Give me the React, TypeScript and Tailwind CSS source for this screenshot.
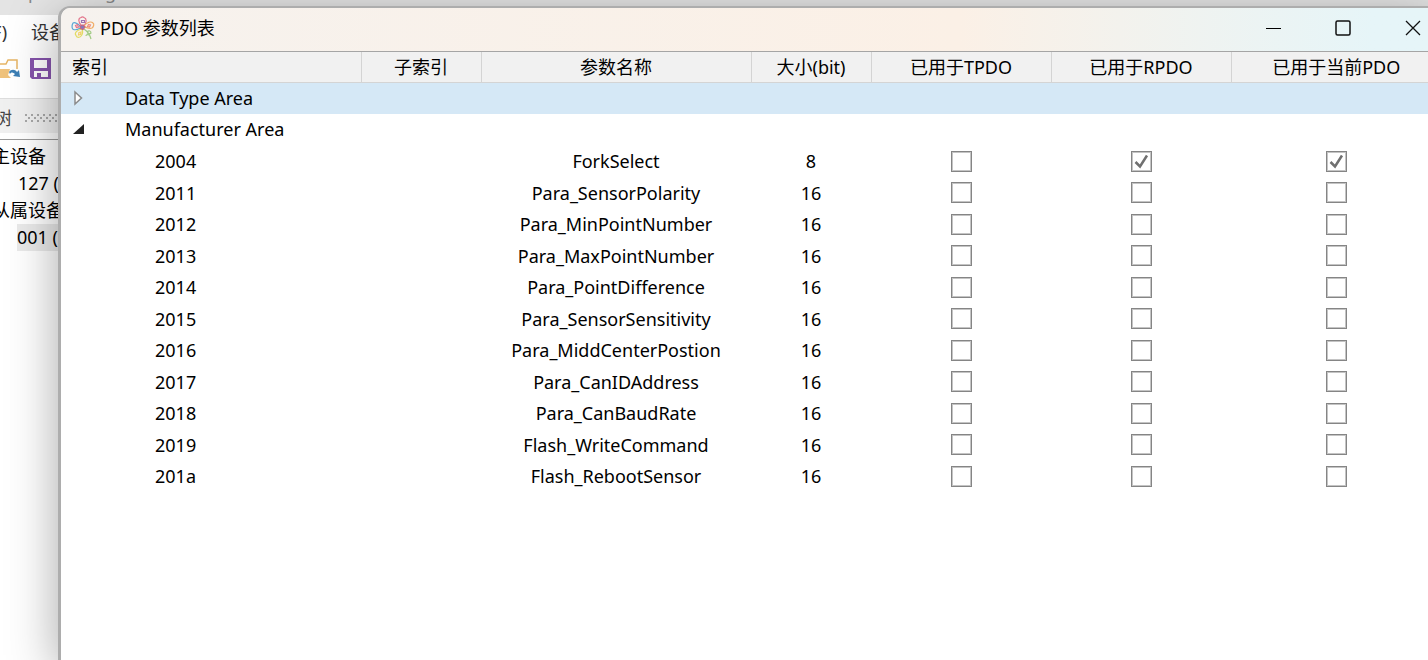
import { useState } from 'react'

type ParameterRow = {
    index: string
    name: string
    size: number
    tpdo: boolean
    rpdo: boolean
    current: boolean
}

const createRow = (
    index: string,
    name: string,
    size = 16,
    rpdo = false,
    current = false,
): ParameterRow => ({ index, name, size, tpdo: false, rpdo, current })

const MANUFACTURER_ROWS: ParameterRow[] = [
    createRow('2004', 'ForkSelect', 8, true, true),
    createRow('2011', 'Para_SensorPolarity'),
    createRow('2012', 'Para_MinPointNumber'),
    createRow('2013', 'Para_MaxPointNumber'),
    createRow('2014', 'Para_PointDifference'),
    createRow('2015', 'Para_SensorSensitivity'),
    createRow('2016', 'Para_MiddCenterPostion'),
    createRow('2017', 'Para_CanIDAddress'),
    createRow('2018', 'Para_CanBaudRate'),
    createRow('2019', 'Flash_WriteCommand'),
    createRow('201a', 'Flash_RebootSensor'),
]

const COLUMNS = [
    '索引',
    '子索引',
    '参数名称',
    '大小(bit)',
    '已用于TPDO',
    '已用于RPDO',
    '已用于当前PDO',
]

const FlowerIcon = () => (
    <svg
        viewBox="0 0 24 24"
        className="size-6"
        fill="none"
        strokeWidth="1.2"
        opacity="0.85"
    >
        <path d="M11 10C7 7 7 2 10 1.5c1-.7 2-.7 3 0 3 1 3 6-1 8.5" stroke="#e0607a" />
        <path d="M10 11C6 6 2 6 1.5 8c-.7 2-.7 5 1 5.5 3 1 5-.5 7.5-2" stroke="#3f9bd0" />
        <path d="M13 10c3-4 7-5 9-3 1.5 1 .5 4-1 5-3 1-5 0-8-1.5" stroke="#f0a04c" />
        <path d="M11 13c-5 1-8 4-6 6.5 1 2.5 4 2.5 5.5 0 1.5-2 1.5-4 .5-6.5" stroke="#ddd84b" />
        <path d="M13 13c3 2 6 6 7 10M16 16c2-2 4-1 4 1-1 1-2 1-4 0M18 19c-2-1-3 0-3 1" stroke="#93c572" />
        <path d="M10.5 4.5h3v2h-3z" stroke="#8c5fa8" />
        <path d="M4.5 9.5l2-1 1 2.5-2 .5z" stroke="#e0607a" />
        <path d="M17.5 8.5l2 .5-1 2-2-.5z" stroke="#ec7a67" />
        <path d="M8 16.5l2-.5-.5 2.5-2 .5z" stroke="#f3c84e" />
        <path d="M9 10l3-1 2 2-2 2.5-2.5-1z" fill="#6d66b5" stroke="#c04c6e" />
    </svg>
)

const OpenFolderIcon = () => (
    <svg viewBox="0 0 24 24" className="size-6" fill="none">
        <path d="M1 14V7h9l2-4h9v9" stroke="#e6b566" strokeWidth="1.5" />
        <path d="M0 21V12h14l-1 3-1 3 3 3z" fill="#efc27c" />
        <path d="M13 15c2-3 6-3 8 0l2-2 1 7-7-1 2-2c-2-2-4-2-5 0z" fill="#3c7fb5" />
    </svg>
)

const SaveIcon = () => (
    <svg viewBox="0 0 21 21" className="size-[21px]">
        <path d="M0 0h21v21H2l-2-2z" fill="#8654ac" />
        <path d="M4 2h13v8H4z" fill="#fff" />
        <path d="M4 13h14v6H4z" fill="#fff" />
        <path d="M7 15h4v5H7z" fill="#8654ac" />
    </svg>
)

const MainWindow = () => (
    <div className="h-full w-full bg-white font-['Noto_Sans','Noto_Sans_CJK_SC',sans-serif] text-[18px] text-black">
        {/* Only the descenders of the caption reach into view */}
        <div className="flex h-[15px] gap-[66px] overflow-hidden bg-[#e4e4e4] pl-7 text-[#888]">
            <span className="-mt-[22px] leading-7">p</span>
            <span className="-mt-[22px] leading-7">g</span>
        </div>
        <nav className="flex h-[34px] items-center gap-6 whitespace-nowrap text-[#333]">
            <button type="button" className="-ml-2">
                F)
            </button>
            <button type="button">设备</button>
        </nav>
        <div className="flex h-[49px] items-start gap-2.5 pt-2">
            <button type="button" aria-label="打开" className="-ml-1">
                <OpenFolderIcon />
            </button>
            <button type="button" aria-label="保存" className="pt-px">
                <SaveIcon />
            </button>
        </div>
        <div className="flex h-[35px] items-center gap-3 border-t border-[#ddd] bg-[#f0f0f0] pt-1 text-[#444]">
            <span className="-ml-1.5">树</span>
            <svg className="h-[9px] w-40" aria-hidden="true">
                <defs>
                    <pattern
                        id="grip"
                        width="6"
                        height="6"
                        patternUnits="userSpaceOnUse"
                    >
                        <path
                            d="M1 0h2v2H1zM4 3h2v2H4z"
                            fill="#a8a8a8"
                        />
                    </pattern>
                </defs>
                <rect width="160" height="9" fill="url(#grip)" />
            </svg>
        </div>
        <div className="mt-1.5 border-t border-[#999] pt-[3px]">
            <ul className="whitespace-nowrap leading-[27px]">
                <li className="-ml-2">主设备</li>
                <li className="ml-[18px]">127 (主)</li>
                <li className="-ml-2">从属设备</li>
                <li className="ml-[17px] w-40 bg-[#eaeaea]">001 (从)</li>
            </ul>
        </div>
    </div>
)

const TitleBar = () => (
    <header className="flex h-11 shrink-0 items-center justify-between border-b border-[#a5a5a5] bg-linear-to-r from-[#f6f2ee] via-[#fbf0e6] via-65% to-[#e6f5f8] to-95% pb-[3px] pl-2.5">
        <div className="flex items-center gap-[5px]">
            <FlowerIcon />
            <h1 className="text-[18px] leading-6">PDO 参数列表</h1>
        </div>
        <div className="flex h-full">
            <button
                type="button"
                aria-label="最小化"
                className="flex w-[69px] items-center justify-center"
            >
                <span className="h-px w-[15px] bg-black" />
            </button>
            <button
                type="button"
                aria-label="最大化"
                className="flex w-[69px] items-center justify-center"
            >
                <svg
                    viewBox="0 0 16 16"
                    className="size-4"
                    fill="none"
                    stroke="#111"
                    strokeWidth="1.5"
                >
                    <rect x="1" y="1" width="14" height="14" rx="1.5" />
                </svg>
            </button>
            <button
                type="button"
                aria-label="关闭"
                className="flex w-[65px] items-center justify-start pl-7"
            >
                <svg
                    viewBox="0 0 16 16"
                    className="size-4"
                    stroke="#111"
                    strokeWidth="1.3"
                >
                    <path d="M1 1l14 14M15 1L1 15" />
                </svg>
            </button>
        </div>
    </header>
)

type CheckCellProps = {
    label: string
    defaultChecked: boolean
}

const CheckCell = ({ label, defaultChecked }: CheckCellProps) => (
    <td className="p-0">
        <label className="relative mx-auto block size-[21px]">
            <input
                type="checkbox"
                aria-label={label}
                defaultChecked={defaultChecked}
                className="peer block size-[21px] appearance-none border border-[#858585] bg-white shadow-[inset_0_0_0_1px_#c4c4c4]"
            />
            <svg
                viewBox="0 0 21 21"
                fill="none"
                stroke="#707070"
                strokeWidth="2.5"
                className="pointer-events-none absolute inset-0 hidden peer-checked:block"
            >
                <path d="M4.5 11l4.5 4.5L16 4.5" />
            </svg>
        </label>
    </td>
)

type GroupRowProps = {
    title: string
    expanded: boolean
    selected?: boolean
    onToggle: () => void
}

const GroupRow = ({ title, expanded, selected, onToggle }: GroupRowProps) => (
    <tr className={selected ? 'h-8 bg-[#d5e8f6]' : 'h-[31px]'}>
        <td colSpan={7} className="p-0 align-top">
            <button
                type="button"
                aria-expanded={expanded}
                onClick={onToggle}
                className="flex h-[30px] items-center gap-10 pl-3"
            >
                <svg viewBox="0 0 12 16" className="h-4 w-3">
                    {expanded ? (
                        <path d="M11 3v10H0z" fill="#222" />
                    ) : (
                        <path
                            d="M2 2l6.5 6L2 14z"
                            fill="#fff"
                            stroke="#8c8c8c"
                            strokeWidth="1.5"
                        />
                    )}
                </svg>
                {title}
            </button>
        </td>
    </tr>
)

const ParameterTable = () => {
    const [dataTypeOpen, setDataTypeOpen] = useState(false)
    const [manufacturerOpen, setManufacturerOpen] = useState(true)

    return (
        <table className="w-full table-fixed border-collapse text-center text-[18px] leading-6">
            <colgroup>
                <col className="w-[300px]" />
                <col className="w-[120px]" />
                <col className="w-[270px]" />
                <col className="w-[120px]" />
                <col className="w-[180px]" />
                <col className="w-[180px]" />
                <col />
            </colgroup>
            <thead>
                <tr className="h-[30px] bg-[#f1f1f1]">
                    {COLUMNS.map((column) => (
                        <th
                            key={column}
                            scope="col"
                            className="border-r border-b border-[#d4d4d4] p-0 font-normal first:pl-[11px] first:text-left"
                        >
                            {column}
                        </th>
                    ))}
                </tr>
            </thead>
            <tbody>
                <GroupRow
                    title="Data Type Area"
                    selected
                    expanded={dataTypeOpen}
                    onToggle={() => setDataTypeOpen(!dataTypeOpen)}
                />
                <GroupRow
                    title="Manufacturer Area"
                    expanded={manufacturerOpen}
                    onToggle={() => setManufacturerOpen(!manufacturerOpen)}
                />
            </tbody>
            {manufacturerOpen && (
                <tbody>
                    {MANUFACTURER_ROWS.map((row) => (
                        <tr key={row.index} className="odd:h-8 even:h-[31px]">
                            <td className="p-0 pl-[94px] text-left">
                                {row.index}
                            </td>
                            <td />
                            <td className="p-0">{row.name}</td>
                            <td className="p-0">{row.size}</td>
                            <CheckCell
                                label={`${row.name} TPDO`}
                                defaultChecked={row.tpdo}
                            />
                            <CheckCell
                                label={`${row.name} RPDO`}
                                defaultChecked={row.rpdo}
                            />
                            <CheckCell
                                label={`${row.name} PDO`}
                                defaultChecked={row.current}
                            />
                        </tr>
                    ))}
                </tbody>
            )}
        </table>
    )
}

const ParameterDialog = () => (
    <section
        role="dialog"
        aria-label="PDO 参数列表"
        className="absolute top-1.5 -right-3.5 bottom-0 left-[58px] flex flex-col overflow-hidden rounded-tl-xl border-t-2 border-l-3 border-[#adadad] bg-white font-['Noto_Sans','Noto_Sans_CJK_SC',sans-serif] text-black shadow-[0_12px_50px_rgba(0,0,0,0.35)]"
    >
        <TitleBar />
        <ParameterTable />
    </section>
)

export default function App() {
    return (
        <main className="relative h-screen overflow-hidden">
            <MainWindow />
            <ParameterDialog />
        </main>
    )
}
